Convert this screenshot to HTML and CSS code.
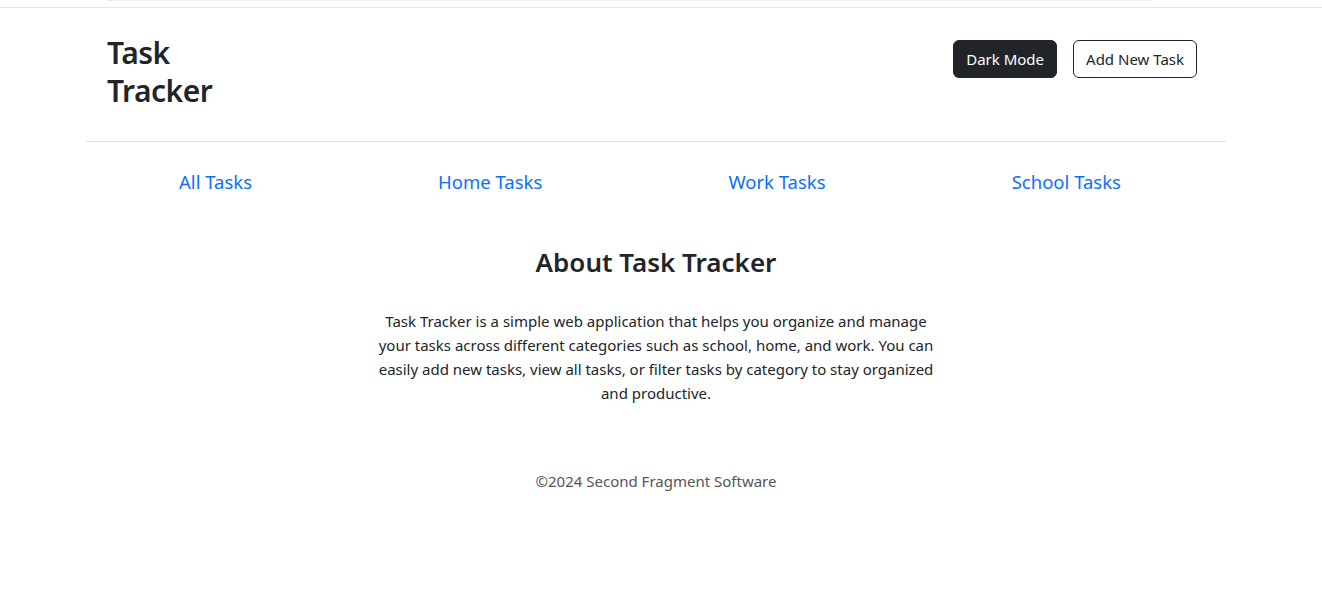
FILE: index.html
```html
<!DOCTYPE html>
<html lang="en">
<head>
<meta charset="utf-8">
<title>Task Tracker</title>
<link rel="stylesheet" href="styles.css">
</head>
<body>
<div class="topbar"><div class="topbar-line"></div></div>
<div class="container">
  <header class="header">
    <h1 class="title">Task<br>Tracker</h1>
    <div class="actions">
      <button class="btn btn-dark">Dark Mode</button>
      <button class="btn btn-outline">Add New Task</button>
    </div>
  </header>
  <nav class="nav">
    <a href="#" class="nav-link">All Tasks</a>
    <a href="#" class="nav-link">Home Tasks</a>
    <a href="#" class="nav-link">Work Tasks</a>
    <a href="#" class="nav-link">School Tasks</a>
  </nav>
  <main class="about">
    <h2 class="about-title">About Task Tracker</h2>
    <p class="about-text">Task Tracker is a simple web application that helps you organize and manage your tasks across different categories such as school, home, and work. You can easily add new tasks, view all tasks, or filter tasks by category to stay organized and productive.</p>
  </main>
  <footer class="footer">©2024 Second Fragment Software</footer>
</div>
</body>
</html>
```
FILE: styles.css
```css
* { box-sizing: border-box; }
body {
  margin: 0;
  font-family: "Noto Sans", "Open Sans", sans-serif;
  color: #212529;
  background: #fff;
}
.topbar {
  height: 8px;
  border-bottom: 1px solid #e5e5e5;
}
.topbar-line {
  margin-left: 107px;
  width: 1045px;
  height: 1px;
  background: #ededed;
}
.container {
  width: 1140px;
  margin-left: 86px;
}
.header {
  display: flex;
  justify-content: space-between;
  align-items: flex-start;
  padding: 26px 29px 31px 21px;
  border-bottom: 1px solid #dee2e6;
}
.title {
  margin: 0;
  font-size: 30px;
  font-weight: 600;
  letter-spacing: -0.5px;
  line-height: 38px;
}
.actions {
  display: flex;
  gap: 16px;
  margin-top: 6px;
}
.btn {
  font-family: inherit;
  font-size: 15px;
  height: 38px;
  padding: 0 12px;
  border-radius: 6px;
  border: 1px solid #212529;
  cursor: pointer;
}
.btn-dark { background: #212529; color: #fff; }
.btn-outline { background: #fff; color: #212529; }
.nav {
  display: flex;
  justify-content: space-around;
  padding: 25px 0 26px;
  margin-right: 12px;
}
.nav-link {
  color: #0d6efd;
  text-decoration: none;
  font-size: 18.5px;
  line-height: 30px;
}
.about {
  text-align: center;
  padding-top: 21px;
}
.about-title {
  margin: 0;
  font-size: 26px;
  font-weight: 600;
  line-height: 36px;
}
.about-text {
  width: 560px;
  margin: 29px auto 0;
  font-size: 15px;
  line-height: 24px;
}
.footer {
  text-align: center;
  margin-top: 66px;
  color: #555;
  font-size: 15px;
}
```
